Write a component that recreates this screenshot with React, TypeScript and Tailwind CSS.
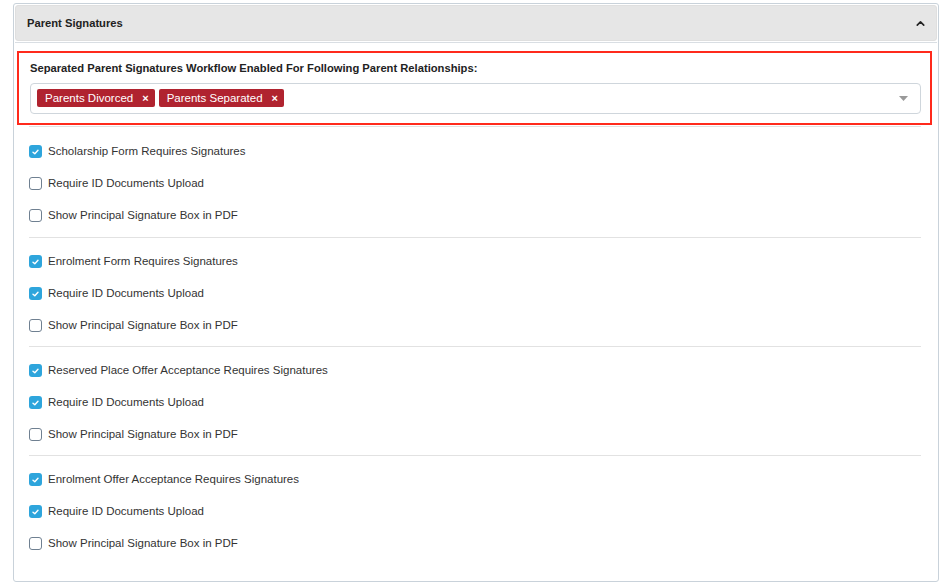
import { ChevronUp } from "lucide-react";

const GROUPS = [
  [
    { label: "Scholarship Form Requires Signatures", checked: true },
    { label: "Require ID Documents Upload", checked: false },
    { label: "Show Principal Signature Box in PDF", checked: false },
  ],
  [
    { label: "Enrolment Form Requires Signatures", checked: true },
    { label: "Require ID Documents Upload", checked: true },
    { label: "Show Principal Signature Box in PDF", checked: false },
  ],
  [
    { label: "Reserved Place Offer Acceptance Requires Signatures", checked: true },
    { label: "Require ID Documents Upload", checked: true },
    { label: "Show Principal Signature Box in PDF", checked: false },
  ],
  [
    { label: "Enrolment Offer Acceptance Requires Signatures", checked: true },
    { label: "Require ID Documents Upload", checked: true },
    { label: "Show Principal Signature Box in PDF", checked: false },
  ],
];

const TAGS = ["Parents Divorced", "Parents Separated"];

function Checkbox({ checked }: { checked: boolean }) {
  if (checked) {
    return (
      <span className="flex h-[13px] w-[13px] shrink-0 items-center justify-center rounded-[3px] bg-[#2ea5dc]">
        <svg width="7" height="6" viewBox="0 0 7 6" fill="none">
          <path d="M1 3.2 2.8 4.8 6 1.2" stroke="white" strokeWidth="1.4" strokeLinecap="round" strokeLinejoin="round" />
        </svg>
      </span>
    );
  }
  return <span className="h-[13px] w-[13px] shrink-0 rounded-[3px] border border-[#6f8091] bg-white" />;
}

function Tag({ text }: { text: string }) {
  return (
    <span className="flex h-[18px] items-center gap-[9px] rounded-[2px] bg-[#b0232f] pl-2 pr-[6px] text-[11.5px] text-white">
      {text}
      <span className="text-[11px] font-bold leading-none">×</span>
    </span>
  );
}

export default function App() {
  return (
    <div className="min-h-screen bg-white pl-[13px] pr-[10px] pt-[3px] font-['Liberation_Sans',Arial,sans-serif] text-[#333]">
      <div className="h-[579px] rounded-[3px] border border-[#c9d2da] bg-white p-px">
        <div className="flex h-[36px] items-center justify-between rounded-[3px] border border-[#dfdfdf] bg-[#e6e6e6] pl-[11px] pr-[9px]">
          <span className="text-[11.2px] font-bold text-[#222]">Parent Signatures</span>
          <ChevronUp className="h-[13px] w-[13px] text-[#222]" strokeWidth={3} />
        </div>
        <div className="mt-px border-t border-[#d9dee3] pl-[2px] pr-[5px] pt-[8px]">
          <div className="border-2 border-[#ff2a1c] pb-[9px] pl-[11px] pr-[9px] pt-[7px]">
            <div className="text-[11.2px] font-bold text-[#222]">
              Separated Parent Signatures Workflow Enabled For Following Parent Relationships:
            </div>
            <div className="mt-[6px] flex h-[31px] items-center justify-between rounded-[4px] border border-[#cfd6dc] pl-[6px] pr-[12px]">
              <div className="flex gap-[4px]">
                {TAGS.map((t) => (
                  <Tag key={t} text={t} />
                ))}
              </div>
              <svg width="9" height="5" viewBox="0 0 9 5">
                <path d="M0 0h9L4.5 5z" fill="#999" />
              </svg>
            </div>
          </div>
        </div>
        <div className="pl-[14px] pr-[16px]">
          {GROUPS.map((group, gi) => (
            <div key={gi} className="border-t border-[#e2e2e2] pb-[4px] pt-[8px] first:mt-px first:pb-[5px] first:pt-[9px] last:pb-0">
              {group.map((item, i) => (
                <div key={i} className="flex h-[32px] items-center gap-[6px] text-[11.5px] text-[#333]">
                  <Checkbox checked={item.checked} />
                  <span>{item.label}</span>
                </div>
              ))}
            </div>
          ))}
        </div>
      </div>
    </div>
  );
}
